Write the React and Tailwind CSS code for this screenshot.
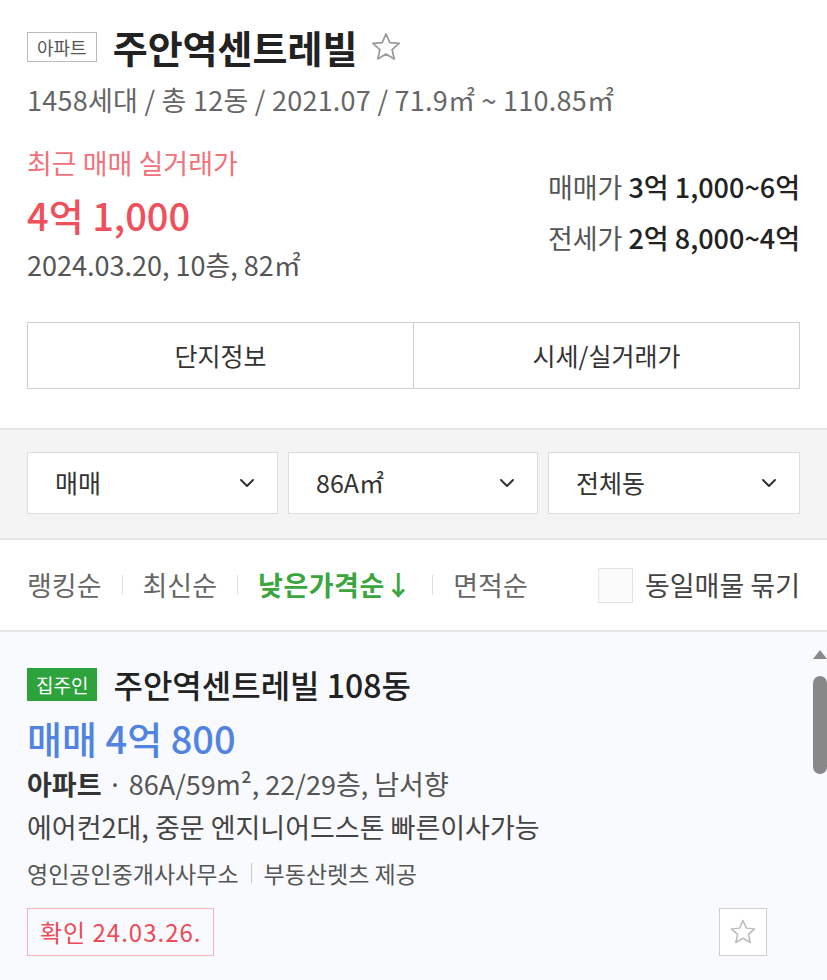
import { ChevronDown } from 'lucide-react'

const FONT = { fontFamily: '"Noto Sans CJK KR", "Noto Sans", sans-serif' }

function Star({ className = '' }) {
  return (
    <svg viewBox="0 0 24 24" className={className} fill="none" stroke="currentColor" strokeWidth="1.2" strokeLinejoin="round">
      <path d="M12 2.8l2.7 6.1 6.6.6-5 4.4 1.5 6.5L12 17l-5.8 3.4 1.5-6.5-5-4.4 6.6-.6z" />
    </svg>
  )
}

function Select({ label, className = '' }) {
  return (
    <div className={`h-[62px] bg-white border border-[#dcdcdc] flex items-center justify-between pl-[27px] pr-[18px] ${className}`}>
      <span className="text-[25px] text-[#333]">{label}</span>
      <ChevronDown className="w-[24px] h-[24px] text-[#333]" strokeWidth={2} />
    </div>
  )
}

function Sep() {
  return <span className="w-px h-[20px] bg-[#dddddd] mx-[20px]" />
}

export default function App() {
  return (
    <div className="w-[827px] h-[980px] bg-white overflow-hidden" style={FONT}>
      {/* complex summary */}
      <div className="px-[27px] pt-[23px]">
        <div className="flex items-center h-[48px]">
          <span className="border border-[#bbbbbb] text-[18px] text-[#555] px-[9px] h-[30px] leading-[28px]">아파트</span>
          <h1 className="ml-[16px] text-[38px] font-bold text-[#222] leading-[48px]">주안역센트레빌</h1>
          <Star className="ml-[12px] w-[34px] h-[34px] text-[#999]" />
        </div>
        <p className="mt-[12px] text-[27px] text-[#666] leading-[34px] tracking-[0.25px]">1458세대 / 총 12동 / 2021.07 / 71.9㎡ ~ 110.85㎡</p>

        <div className="mt-[29px] flex justify-between">
          <div>
            <p className="text-[27px] text-[#f0727b] leading-[34px]">최근 매매 실거래가</p>
            <p className="mt-[12px] text-[38px] font-medium text-[#ef505b] leading-[46px]">4억 1,000</p>
            <p className="mt-[10px] text-[27px] text-[#555] leading-[34px]">2024.03.20, 10층, 82㎡</p>
          </div>
          <div className="pt-[24px] text-right text-[27px] leading-[34px]">
            <p className="text-[#555]">매매가 <span className="text-[#222] font-medium">3억 1,000~6억</span></p>
            <p className="mt-[17px] text-[#555]">전세가 <span className="text-[#222] font-medium">2억 8,000~4억</span></p>
          </div>
        </div>

        <div className="mt-[40px] flex h-[67px] border border-[#cfcfcf]">
          <div className="flex-1 flex items-center justify-center text-[25px] text-[#333] border-r border-[#cfcfcf]">단지정보</div>
          <div className="flex-1 flex items-center justify-center text-[25px] text-[#333]">시세/실거래가</div>
        </div>
      </div>

      {/* filters */}
      <div className="mt-[39px] border-t-2 border-b-2 border-[#e6e6e6] bg-[#f4f4f4] px-[27px] pt-[22px] pb-[24px] flex gap-[10px]">
        <Select label="매매" className="w-[251px]" />
        <Select label="86A㎡" className="w-[250px]" />
        <Select label="전체동" className="flex-1" />
      </div>

      {/* sort */}
      <div className="h-[90px] px-[27px] flex items-center text-[27px] text-[#666]">
        <span>랭킹순</span>
        <Sep />
        <span>최신순</span>
        <Sep />
        <span className="text-[#3ba63e] font-bold tracking-[0.5px]">낮은가격순↓</span>
        <Sep />
        <span>면적순</span>
        <div className="ml-auto flex items-center">
          <span className="w-[35px] h-[35px] border border-[#e3e3e3] bg-[#fbfbfb]" />
          <span className="ml-[12px] text-[#444]">동일매물 묶기</span>
        </div>
      </div>

      {/* listing */}
      <div className="border-t-2 border-[#e6e6e6] bg-[#f8fafd] h-[400px] flex">
        <div className="flex-1 pl-[27px] pr-[45px] pt-[30px]">
          <div className="flex items-center h-[44px]">
            <span className="bg-[#2fa33b] text-white text-[19px] px-[9px] h-[33px] leading-[33px]">집주인</span>
            <span className="ml-[16px] text-[32px] font-medium text-[#222] leading-[44px]">주안역센트레빌 108동</span>
          </div>
          <p className="mt-[9px] text-[38px] font-medium text-[#5183e0] leading-[46px]">매매 4억 800</p>
          <p className="mt-[6px] text-[27px] text-[#555] leading-[34px]"><span className="font-bold text-[#333]">아파트</span> · 86A/59m², 22/29층, 남서향</p>
          <p className="mt-[9px] text-[27px] text-[#444] leading-[34px]">에어컨2대, 중문 엔지니어드스톤 빠른이사가능</p>
          <div className="mt-[13px] flex items-center text-[23px] text-[#555] leading-[32px]">
            <span>영인공인중개사사무소</span>
            <span className="w-px h-[20px] bg-[#cccccc] mx-[12px]" />
            <span>부동산렛츠 제공</span>
          </div>
          <div className="mt-[19px] flex items-center justify-between">
            <span className="h-[48px] px-[12px] border border-[#f4b4b8] text-[#ec4b57] text-[24px] leading-[46px] tracking-[1px]">확인 24.03.26.</span>
            <span className="w-[48px] h-[48px] border border-[#cfcfcf] bg-white flex items-center justify-center">
              <Star className="w-[30px] h-[30px] text-[#bbb]" />
            </span>
          </div>
        </div>
        <div className="w-[15px] flex flex-col items-center pt-[18px]">
          <span className="w-0 h-0 border-l-[7px] border-r-[7px] border-b-[9px] border-l-transparent border-r-transparent border-b-[#888]" />
          <span className="mt-[17px] w-[14px] h-[98px] rounded-[7px] bg-[#888]" />
        </div>
      </div>
    </div>
  )
}
